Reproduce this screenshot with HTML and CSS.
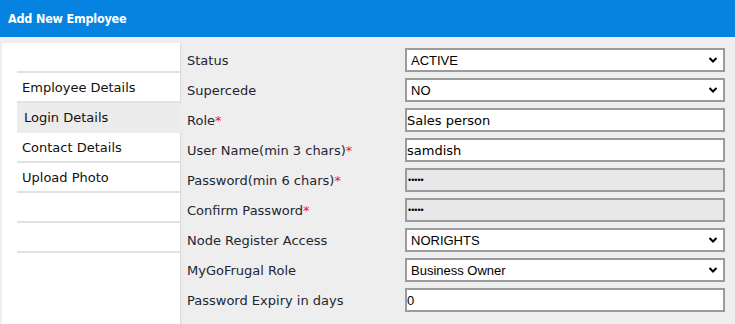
FILE: index.html
```html
<!DOCTYPE html>
<html>
<head>
<meta charset="utf-8">
<link rel="stylesheet" href="styles.css">
</head>
<body>
<header class="top">Add New Employee</header>
<div class="main">
  <aside class="side">
    <ul class="tabs">
      <li class="tab">Employee Details</li>
      <li class="tab active">Login Details</li>
      <li class="tab">Contact Details</li>
      <li class="tab">Upload Photo</li>
      <li class="tab"></li>
      <li class="tab"></li>
    </ul>
  </aside>
  <section class="form">
    <label class="lbl">Status</label>
    <div class="sel"><select class="ctl"><option>ACTIVE</option></select><svg class="chev" width="10" height="8" viewBox="0 0 10 8"><polyline points="1.5,2 5,5.5 8.5,2" fill="none" stroke="#000" stroke-width="2"/></svg></div>
    <label class="lbl">Supercede</label>
    <div class="sel"><select class="ctl"><option>NO</option></select><svg class="chev" width="10" height="8" viewBox="0 0 10 8"><polyline points="1.5,2 5,5.5 8.5,2" fill="none" stroke="#000" stroke-width="2"/></svg></div>
    <label class="lbl">Role<span class="req">*</span></label>
    <input class="ctl txt" type="text" value="Sales person">
    <label class="lbl">User Name(min 3 chars)<span class="req">*</span></label>
    <input class="ctl txt" type="text" value="samdish">
    <label class="lbl">Password(min 6 chars)<span class="req">*</span></label>
    <input class="ctl txt pw" type="password" value="aaaaa" readonly>
    <label class="lbl">Confirm Password<span class="req">*</span></label>
    <input class="ctl txt pw" type="password" value="aaaaa" readonly>
    <label class="lbl">Node Register Access</label>
    <div class="sel"><select class="ctl"><option>NORIGHTS</option></select><svg class="chev" width="10" height="8" viewBox="0 0 10 8"><polyline points="1.5,2 5,5.5 8.5,2" fill="none" stroke="#000" stroke-width="2"/></svg></div>
    <label class="lbl">MyGoFrugal Role</label>
    <div class="sel"><select class="ctl"><option>Business Owner</option></select><svg class="chev" width="10" height="8" viewBox="0 0 10 8"><polyline points="1.5,2 5,5.5 8.5,2" fill="none" stroke="#000" stroke-width="2"/></svg></div>
    <label class="lbl">Password Expiry in days</label>
    <input class="ctl txt num" type="text" value="0">
  </section>
</div>
</body>
</html>
```
FILE: styles.css
```css
html, body {
  margin: 0;
  padding: 0;
  background: #eeeeee;
  height: 100%;
  overflow: hidden;
}
body {
  font-family: "DejaVu Sans", Verdana, sans-serif;
}
.top {
  height: 37px;
  background: #0683e0;
  color: #fff;
  font-family: "DejaVu Sans Condensed", "DejaVu Sans", sans-serif;
  font-weight: bold;
  font-size: 12.5px;
  line-height: 37px;
  padding-left: 8px;
  letter-spacing: -0.2px;
}
.main {
  display: flex;
  margin-top: 6px;
  height: calc(100% - 43px);
}
.side {
  width: 178px;
  margin-left: 2px;
  background: #fff;
  box-shadow: 1px 0 1px #dcdcdc;
  padding-top: 28px;
  box-sizing: border-box;
}
.tabs {
  list-style: none;
  margin: 0 0 0 15px;
  padding: 0;
  border-top: 2px solid #e2e2e2;
}
.tab {
  height: 28px;
  line-height: 30px;
  border-bottom: 2px solid #e2e2e2;
  padding-left: 5px;
  font-size: 13px;
  color: #111;
}
.tab.active {
  background: #ececec;
  border-bottom-color: #ececec;
  padding-left: 7px;
  margin-right: -2px;
}
.form {
  flex: 1;
  display: grid;
  grid-template-columns: 218px 320px;
  grid-auto-rows: 24px;
  row-gap: 6px;
  align-content: start;
  padding: 5px 0 0 7px;
}
.lbl {
  font-size: 13px;
  color: #1d2633;
  line-height: 26px;
}
.req {
  color: #f0142d;
}
.sel {
  position: relative;
}
.ctl {
  box-sizing: border-box;
  width: 320px;
  height: 24px;
  border: 2px solid #9b9b9b;
  background: #fff;
  margin: 0;
  outline: none;
  color: #000;
}
select.ctl {
  appearance: none;
  -webkit-appearance: none;
  font-family: "Liberation Sans", Arial, sans-serif;
  font-size: 13px;
  padding: 0 0 0 4px;
  border-radius: 0;
}
.chev {
  position: absolute;
  right: 7px;
  top: 8px;
  pointer-events: none;
}
.txt {
  font-family: "DejaVu Sans", Verdana, sans-serif;
  font-size: 13px;
  padding: 0;
}
.num {
  font-family: "Liberation Sans", Arial, sans-serif;
}
.pw {
  background: #e8e8e8;
  font-family: "Liberation Sans", Arial, sans-serif;
  font-size: 9px;
  padding-left: 1px;
}
```
